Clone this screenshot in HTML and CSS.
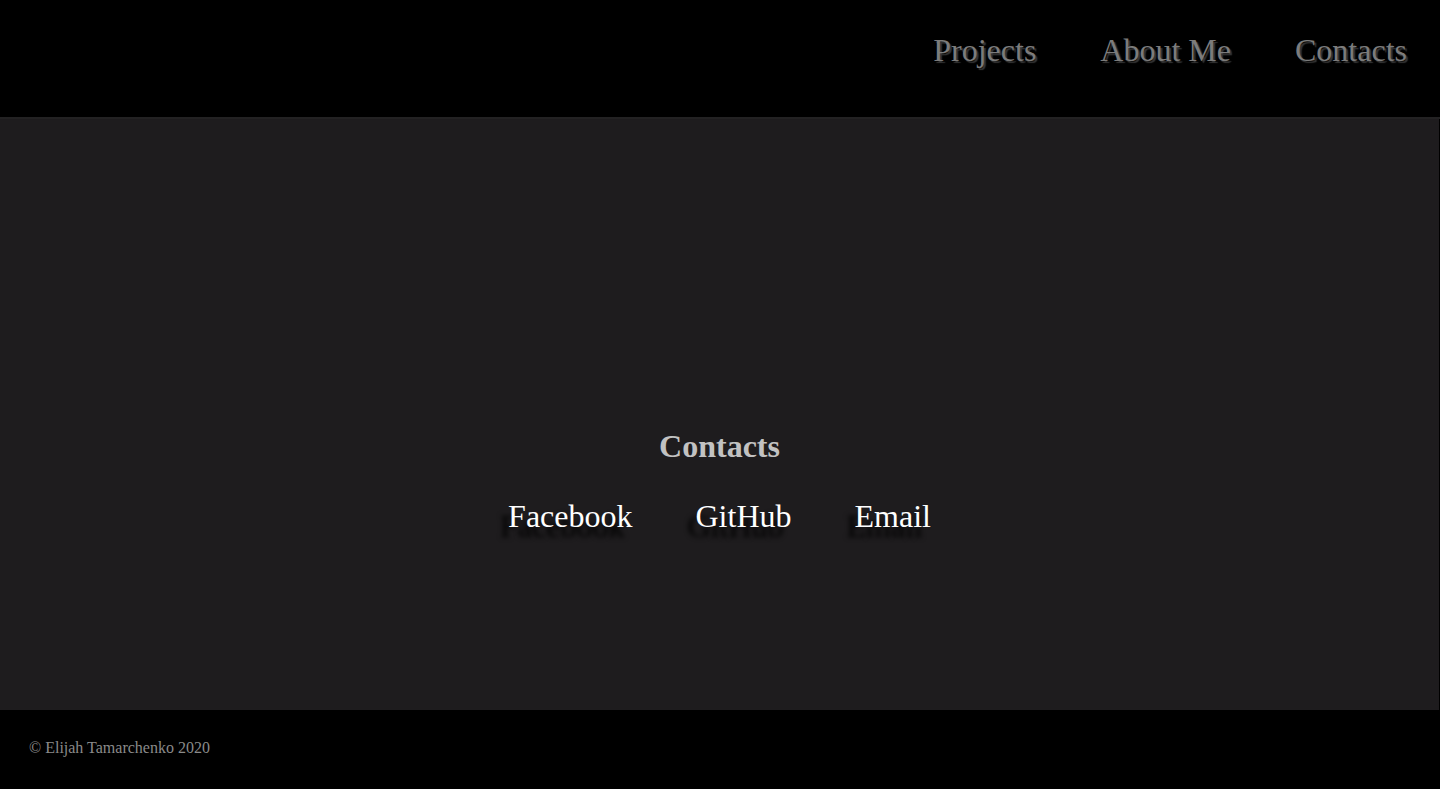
FILE: index.html
```html
<!DOCTYPE html>
<html lang="en">
<head>
<meta charset="utf-8">
<title>Contacts</title>
<link rel="stylesheet" href="styles.css">
</head>
<body>
<header class="site-header">
  <nav class="nav">
    <a class="nav-link" href="#">Projects</a>
    <a class="nav-link" href="#">About Me</a>
    <a class="nav-link" href="#">Contacts</a>
  </nav>
</header>
<main class="main">
  <h1 class="title">Contacts</h1>
  <div class="links">
    <a class="contact-link" href="#">Facebook</a>
    <a class="contact-link" href="#">GitHub</a>
    <a class="contact-link" href="#">Email</a>
  </div>
</main>
<footer class="footer">
  <p class="copy">© Elijah Tamarchenko 2020</p>
</footer>
</body>
</html>
```
FILE: styles.css
```css
html, body {
  margin: 0;
  padding: 0;
}
body {
  background: #000;
  font-family: "Liberation Serif", "Times New Roman", serif;
  height: 789px;
  overflow: hidden;
}
.site-header {
  height: 117px;
  background: #000;
  border-bottom: 2px solid #232223;
}
.nav {
  display: flex;
  justify-content: flex-end;
  padding: 32px 1px 0 0;
}
.nav-link {
  font-size: 32px;
  line-height: 36px;
  color: #7c7c7c;
  text-decoration: none;
  margin: 0 32px;
  text-shadow: 2px 2px 1px #363636;
}
.main {
  height: 591px;
  box-sizing: border-box;
  background: #1e1c1e;
  border-right: 1px solid #000;
  display: flex;
  flex-direction: column;
  align-items: center;
  padding-top: 309px;
}
.title {
  margin: 0;
  font-size: 32px;
  line-height: 36px;
  font-weight: bold;
  color: #c2c2c2;
}
.links {
  display: flex;
  margin-top: 34px;
}
.contact-link {
  font-size: 32px;
  line-height: 36px;
  color: #fff;
  text-decoration: none;
  margin: 0 31.5px;
  text-shadow: -8px 10px 5px #000;
}
.footer {
  height: 79px;
  box-sizing: border-box;
  background: #000;
  padding: 29px 29px 0;
}
.copy {
  margin: 0;
  font-size: 16px;
  line-height: 18px;
  color: #8a8a8a;
}
```
